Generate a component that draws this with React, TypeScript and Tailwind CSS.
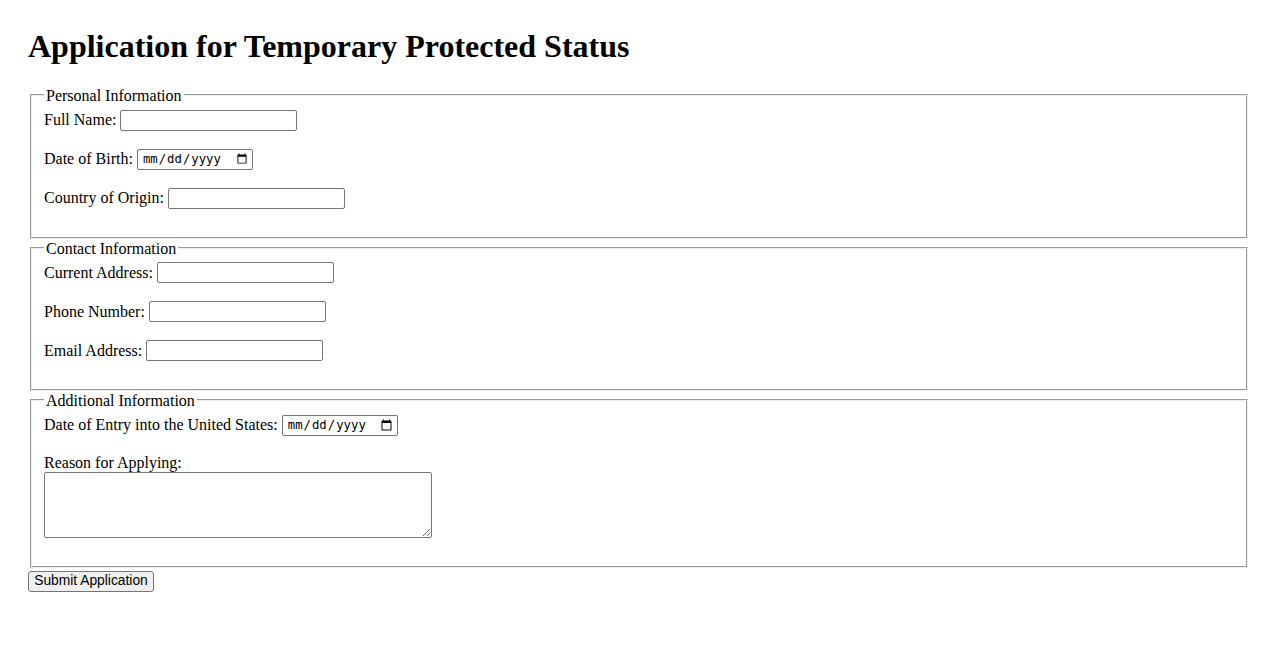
import React from 'react';

const serif = "font-['Liberation_Serif','Times_New_Roman',serif]";
const textInput =
  "h-[21px] w-[177px] rounded-[2px] border border-[#767676] bg-white px-[2px] py-[1px] font-['Liberation_Sans',Arial,sans-serif] text-[13.33px] text-black outline-none";
const dateInput =
  "h-[21px] w-[116px] rounded-[2px] border border-[#767676] bg-white pl-[4px] pr-[2px] py-[1px] font-['DejaVu_Sans_Mono','Liberation_Mono',monospace] text-[12.3px] text-black outline-none";

function Row({ label, children }: { label: string; children: React.ReactNode }) {
  return (
    <div className="mb-[18px] flex h-[21px] items-center gap-[4px]">
      <label className="leading-[18px]">{label}</label>
      {children}
    </div>
  );
}

function Section({ title, children }: { title: string; children: React.ReactNode }) {
  return (
    <fieldset className="mx-[2px] min-w-0 border-2 border-[#eeeeee] px-[12px] pt-[5.6px] pb-[10px] [border-style:groove]">
      <legend className="px-[2px] leading-[18px]">
        <span className="relative top-[1px]">{title}</span>
      </legend>
      {children}
    </fieldset>
  );
}

export default function App() {
  return (
    <div className={`${serif} min-h-[650px] bg-white px-[28px] pt-[28px] text-[16px] text-black`}>
      <h1 className="mb-[21px] text-[32px] font-bold leading-[37px]">Application for Temporary Protected Status</h1>

      <form onSubmit={e => e.preventDefault()}>
        <Section title="Personal Information">
          <Row label="Full Name:">
            <input type="text" className={textInput} />
          </Row>
          <Row label="Date of Birth:">
            <input type="date" className={dateInput} />
          </Row>
          <Row label="Country of Origin:">
            <input type="text" className={textInput} />
          </Row>
        </Section>

        <Section title="Contact Information">
          <Row label="Current Address:">
            <input type="text" className={textInput} />
          </Row>
          <Row label="Phone Number:">
            <input type="tel" className={textInput} />
          </Row>
          <Row label="Email Address:">
            <input type="email" className={textInput} />
          </Row>
        </Section>

        <Section title="Additional Information">
          <Row label="Date of Entry into the United States:">
            <input type="date" className={dateInput} />
          </Row>
          <label className="block leading-[18px]">Reason for Applying:</label>
          <textarea className="mb-[18px] block h-[66px] w-[388px] rounded-[2px] border border-[#767676] bg-white px-[2px] py-[2px] font-['Liberation_Mono',monospace] text-[13.33px] outline-none" />
        </Section>

        <button
          type="submit"
          className="h-[21px] w-[126px] whitespace-nowrap rounded-[3px] border border-[#767676] bg-[#efefef] px-0 pb-[1px] font-['Liberation_Sans',Arial,sans-serif] text-[13.8px] leading-none text-black"
        >
          Submit Application
        </button>
      </form>
    </div>
  );
}
